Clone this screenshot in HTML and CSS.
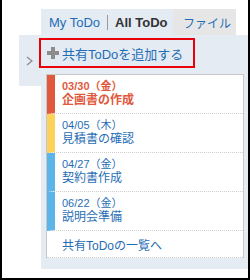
FILE: index.html
```html
<!DOCTYPE html>
<html lang="ja">
<head>
  <meta charset="UTF-8">
  <title>共有ToDo</title>
  <link rel="stylesheet" href="styles.css">
</head>
<body>
  <div class="frame">
    <div class="tabs">
      <div class="tab tab-main">
        <a class="tab-link">My ToDo</a>
        <span class="tab-sep"></span>
        <span class="tab-current">All ToDo</span>
      </div>
      <div class="tab tab-file">
        <a class="tab-link">ファイル</a>
      </div>
    </div>

    <div class="content">
      <div class="side">
        <svg width="8" height="10" viewBox="0 0 8 10">
          <polyline points="1,1 6,5 1,9" fill="none" stroke="#8a8a8a" stroke-width="1.2"/>
        </svg>
      </div>

      <div class="panel">
        <a class="add-link">
          <svg class="plus" width="12" height="12" viewBox="0 0 12 12">
            <rect x="4" y="0" width="4" height="12" fill="#8c8c8c"/>
            <rect x="0" y="4" width="12" height="4" fill="#8c8c8c"/>
          </svg>
          共有ToDoを追加する
        </a>

        <ul class="todo-list">
          <li class="todo overdue">
            <div class="todo-date">03/30（金）</div>
            <div class="todo-title">企画書の作成</div>
          </li>
          <li class="todo soon">
            <div class="todo-date">04/05（木）</div>
            <div class="todo-title">見積書の確認</div>
          </li>
          <li class="todo later">
            <div class="todo-date">04/27（金）</div>
            <div class="todo-title">契約書作成</div>
          </li>
          <li class="todo later">
            <div class="todo-date">06/22（金）</div>
            <div class="todo-title">説明会準備</div>
          </li>
          <li class="todo-more"><a>共有ToDoの一覧へ</a></li>
        </ul>
      </div>
    </div>
  </div>
</body>
</html>
```

FILE: styles.css
```css
body {
  margin: 0;
  font-family: "Liberation Sans", "Noto Sans CJK JP", sans-serif;
}

.frame {
  width: 250px;
  height: 280px;
  box-sizing: border-box;
  border: 2px solid #000;
  border-top: none;
  padding-top: 9px;
  background: #fff;
}

.tabs {
  display: flex;
  margin-left: 39px;
  height: 26px;
}

.tab {
  display: flex;
  align-items: center;
  font-size: 13px;
  white-space: nowrap;
  box-sizing: border-box;
}

.tab-main {
  background: #e4ebf3;
  padding-left: 8px;
  width: 132px;
}

.tab-link {
  color: #1f6db5;
}

.tab-sep {
  width: 1px;
  height: 15px;
  background: #999;
  margin: 0 7px;
}

.tab-current {
  font-weight: bold;
  color: #333;
}

.tab-file {
  background: #e6e6e6;
  padding-left: 10px;
  width: 63px;
  font-size: 12px;
}

.content {
  display: flex;
  align-items: flex-start;
}

.side {
  width: 22px;
  height: 51px;
  margin-left: 17px;
  background: #e4ebf3;
  padding: 21px 0 0 7px;
  box-sizing: border-box;
}

.side svg {
  display: block;
}

.panel {
  flex: 1;
  height: 234px;
  box-sizing: border-box;
  background: #e4ebf3;
  padding: 3px 4px 0 5px;
}

.add-link {
  display: flex;
  align-items: center;
  margin-left: -7px;
  height: 30px;
  width: 156px;
  box-sizing: border-box;
  border: 2px solid #e8000b;
  color: #1f6db5;
  font-size: 13px;
  padding-left: 6px;
}

.plus {
  margin-right: 3px;
}

.todo-list {
  list-style: none;
  margin: 6px 0 0;
  padding: 0;
  background: #fff;
  border: 1px solid #c8c8c8;
  border-bottom: none;
}

.todo {
  height: 39px;
  box-sizing: border-box;
  border-left: 8px solid #5bb5e9;
  border-bottom: 1px dotted #cfcfcf;
  padding: 5px 0 0 7px;
  color: #1f6db5;
}

.todo.overdue {
  border-left-color: #e0593d;
  color: #e0593d;
}

.todo.soon {
  border-left-color: #fdd25b;
}

.todo-date {
  font-size: 11px;
  line-height: 13px;
}

.todo.overdue .todo-date,
.todo.overdue .todo-title {
  font-weight: bold;
}

.todo-title {
  font-size: 12px;
  line-height: 15px;
}

.todo-more {
  height: 27px;
  box-sizing: border-box;
  padding-left: 15px;
  display: flex;
  align-items: center;
  font-size: 12px;
  color: #1f6db5;
  border-bottom: 1px dotted #cfcfcf;
}
```
